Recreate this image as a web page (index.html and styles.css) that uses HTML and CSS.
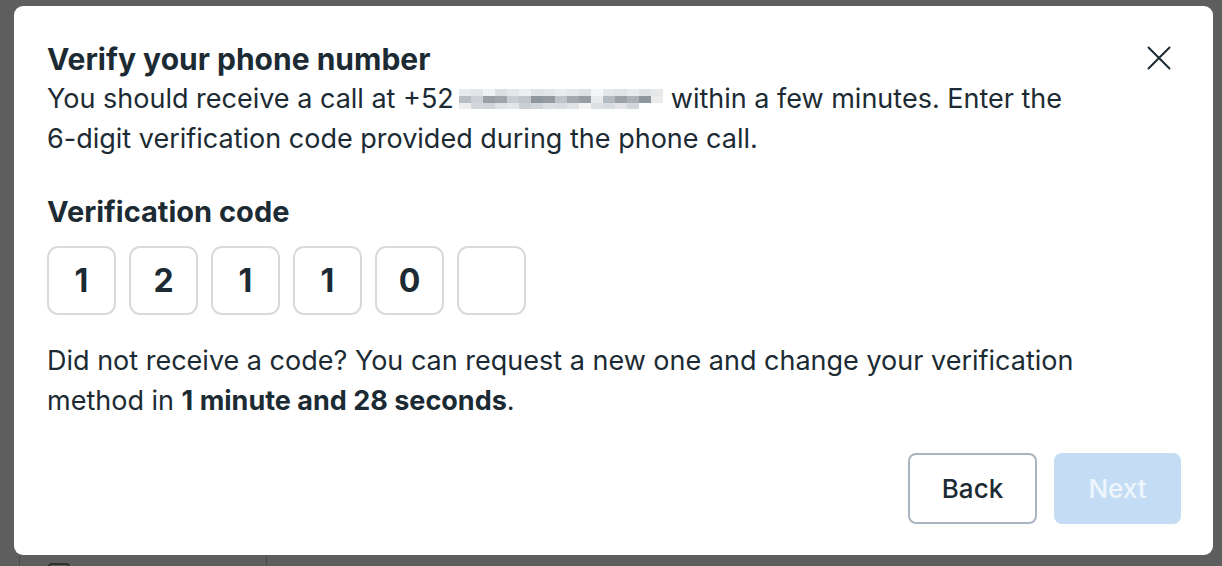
FILE: index.html
```html
<!DOCTYPE html>
<html>
<head>
    <link rel="stylesheet" href="styles.css">
</head>
<body>
    <div class="page">
        <div class="page-side">
            <span class="page-box"></span>
            <span class="page-text">Sign profile</span>
        </div>
    </div>
    <div class="backdrop">
        <div class="modal">
            <button class="close" aria-label="Close">
                <svg width="24" height="24" viewBox="0 0 24 24"><path d="M1.5 1.5 L22.5 22.5 M22.5 1.5 L1.5 22.5" stroke="#1c2b33" stroke-width="2" stroke-linecap="round"/></svg>
            </button>
            <h1 class="title">Verify your phone number</h1>
            <p class="text">You should receive a call at +52<span class="blur"><span class="blur-grid" id="blur"></span></span>within a few minutes. Enter the <span class="nowrap">6-digit</span> verification code provided during the phone call.</p>

            <h2 class="label">Verification code</h2>
            <div class="code">
                <div class="digit">1</div>
                <div class="digit">2</div>
                <div class="digit">1</div>
                <div class="digit">1</div>
                <div class="digit">0</div>
                <div class="digit"></div>
            </div>

            <p class="text">Did not receive a code? You can request a new one and change your verification method in <b>1 minute and 28 seconds</b>.</p>

            <div class="actions">
                <button class="btn btn-back">Back</button>
                <button class="btn btn-next" disabled>Next</button>
            </div>
        </div>
    </div>
<script>
        // pixelated phone number
        var shades = [
            'e8ebed','e2e5e7','eef0f1','dcdfe2','e4e7e9','eceef0','dfe2e5','e2e5e7','e9ebed','e5e8ea','dee1e4','f5f6f7','e4e7e9','e0e3e6','e8eaec','dfe2e5','e5e7e9',
            'b8bfc4','cdd1d5','98a0a6','9ea6ac','c8cdd1','bfc5c9','8e979d','939ba1','bdc3c7','a1a9ae','969ea4','e8eaec','b4bbc0','9aa2a8','abb2b7','8f979e',
            'e9ebed','eceef0','d3d7db','d0d4d8','dfe2e5','e3e6e8','cacfd3','d2d6da','dcdfe2','d8dbdf','e1e4e6','f3f4f5','dde0e3','d8dbdf','e2e4e7','d3d7db'
        ];
        var blur = document.getElementById('blur');
        shades.forEach(function (c) {
            var cell = document.createElement('i');
            cell.style.background = '#' + c;
            blur.appendChild(cell);
        });
    </script>
</body>
</html>
```
FILE: styles.css
```css
body {
    margin: 0;
    padding: 0;
    font-family: Inter, "Noto Sans", sans-serif;
    color: #1c2b33;
    background-color: #5e5e5e;
}
.page {
    height: 566px;
    overflow: hidden;
    background-color: #5e5e5e;
}
.page-side {
    margin: 556px 0 0 19px;
    width: 248px;
    height: 40px;
    border-left: 1px solid #4a4a4a;
    border-right: 1px solid #4a4a4a;
    display: flex;
    align-items: flex-start;
    gap: 28px;
    padding: 7px 0 0 28px;
    box-sizing: border-box;
}
.page-box {
    width: 18px;
    height: 18px;
    border: 2px solid #2e2e2e;
    border-radius: 4px;
}
.page-text {
    font-size: 22px;
    color: #2e2e2e;
}
.backdrop {
    position: absolute;
    top: 0;
    left: 0;
    right: 0;
    padding: 6px 9px 0 14px;
}
.modal {
    position: relative;
    background: #ffffff;
    border-radius: 9px;
    height: 549px;
    box-sizing: border-box;
    padding: 33px 32px 32px 33px;
}
.close {
    position: absolute;
    top: 40px;
    right: 42px;
    border: 0;
    background: none;
    padding: 0;
    width: 24px;
    height: 24px;
}
.title {
    margin: 0;
    font-size: 30px;
    line-height: 40px;
    font-weight: 700;
}
.text {
    margin: 0;
    font-size: 27px;
    line-height: 40px;
    max-width: 1090px;
}
.nowrap {
    white-space: nowrap;
}
.blur {
    display: inline-block;
    overflow: hidden;
    width: 204px;
    height: 20px;
    margin: 0 8px 0 5px;
    vertical-align: -1px;
}
.blur-grid {
    display: grid;
    grid-template-columns: repeat(17, 12px);
    grid-template-rows: 7px 7px 6px;
}
.blur-grid i {
    display: block;
}
.label {
    margin: 33px 0 14px;
    font-size: 29px;
    line-height: 40px;
    font-weight: 700;
}
.code {
    display: flex;
    gap: 13px;
    margin-bottom: 26px;
}
.digit {
    width: 69px;
    height: 69px;
    box-sizing: border-box;
    border: 2px solid #dadada;
    border-radius: 11px;
    display: flex;
    align-items: center;
    justify-content: center;
    font-size: 32px;
    font-weight: 700;
}
.actions {
    display: flex;
    justify-content: flex-end;
    gap: 17px;
    margin-top: 32px;
}
.btn {
    height: 71px;
    border-radius: 8px;
    font-family: Inter, "Noto Sans", sans-serif;
    font-size: 26px;
    font-weight: 500;
}
.btn-back {
    width: 129px;
    border: 2px solid #a9b6c2;
    background: #ffffff;
    color: #1c2b33;
}
.btn-next {
    width: 127px;
    border: 0;
    background: #c4ddf4;
    color: #eef5fc;
}
```
